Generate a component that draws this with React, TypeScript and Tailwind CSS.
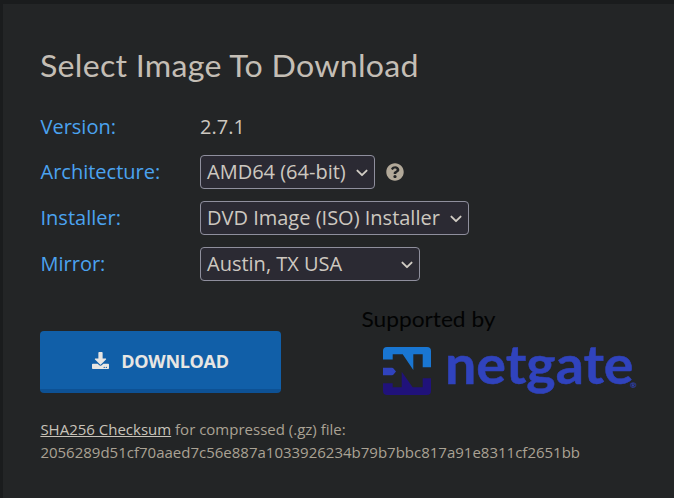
import { FaDownload, FaQuestionCircle } from "react-icons/fa";
import type { ReactNode } from "react";

function SelectBox({ label, width }: { label: string; width: string }) {
  return (
    <button
      type="button"
      className={`flex h-[34px] ${width} items-center justify-between rounded-[4px] border border-[#8f8f9d] bg-[#2b2a33] pr-[6.5px] pl-[6px] text-[20px] leading-[32px] whitespace-nowrap text-[#cdc8c0]`}
    >
      <span>{label}</span>
      <svg width="12" height="8" viewBox="0 0 12 8" fill="none" className="mt-[1px]">
        <path d="M1.4 1.6 6 6.200l4.600-4.600" stroke="#d0cbc3" strokeWidth="1.9" strokeLinecap="round" strokeLinejoin="round" />
      </svg>
    </button>
  );
}

function Row({ label, children }: { label: string; children: ReactNode }) {
  return (
    <div className="flex h-[46px] items-center">
      <div className="w-[160px] pl-[0.5px] text-[20px] text-[#4ba3f0]">{label}</div>
      {children}
    </div>
  );
}

function NetgateLogo() {
  return (
    <svg width="290" height="100" viewBox="350 303 290 100">
      <text x="361.5" y="327" fontFamily="Lato, sans-serif" fontSize="20.500" fill="#020303" textLength="134" lengthAdjust="spacingAndGlyphs">
        Supported by
      </text>
      <path d="M383 359.500V351q0-4 4-4h40q4 0 4 4v16.300h-8.300v-13h-9.400V370l-10.600-15.700h-10v5.200z" fill="#1976d2" />
      <path d="M383 367.700h9q1 0 1.500.7l2.500 3.100-2.500 3.100q-.5.7-1.500.7h-9z" fill="#3043bd" />
      <path d="M383 383.300h9.700v4h9v-15.600l11 15.600h10v-9h8.300V391q0 4-4 4h-40q-4 0-4-4z" fill="#20127a" />
      <text x="445" y="384" fontFamily="Lato, sans-serif" fontWeight="700" fontSize="53" fill="#3043bd" stroke="#3043bd" strokeWidth="0.5" textLength="188.500" lengthAdjust="spacingAndGlyphs">
        netgate
      </text>
      <text x="630" y="388" fontFamily="Lato, sans-serif" fontWeight="700" fontSize="8" fill="#3043bd">
        ®
      </text>
    </svg>
  );
}

export default function App() {
  return (
    <div className="h-[498px] w-[674px] overflow-hidden bg-[#1a1c1d] pt-1 pl-[3px] font-['Open_Sans',sans-serif]">
      <main className="flex h-[494px] flex-col bg-[#232526] pt-[38px] pl-[37px]">
        <h1 className="h-[48px] w-fit origin-left scale-x-[1.071] font-[Lato,sans-serif] text-[30px] leading-[47px] tracking-[0.25px] whitespace-nowrap text-[#c4beb5]">
          Select Image To Download
        </h1>
        <div className="mt-[14px]">
          <Row label="Version:">
            <span className="text-[20px] text-[#cdc8c0]">2.7.1</span>
          </Row>
          <div className="-mt-px">
            <Row label="Architecture:">
              <SelectBox label="AMD64 (64-bit)" width="w-[175px]" />
              <FaQuestionCircle className="ml-[10.5px] size-[18px] text-[#b2a999]" />
            </Row>
            <Row label="Installer:">
              <SelectBox label="DVD Image (ISO) Installer" width="w-[269px]" />
            </Row>
            <Row label="Mirror:">
              <SelectBox label="Austin, TX USA" width="w-[220px]" />
            </Row>
          </div>
        </div>
        <div className="mt-[16px] flex h-[100px] items-start">
          <button
            type="button"
            className="mt-[28px] flex h-[62px] w-[241px] items-center justify-center gap-[12px] rounded-[4px] border-b-4 border-[#0d5194] bg-[#115fa8] pt-[2px] text-[18px] font-bold text-[#e8e6e3]"
          >
            <FaDownload className="mb-[2px] size-[17px]" />
            <span className="tracking-[-0.3px]">DOWNLOAD</span>
          </button>
          <div className="ml-[69px]">
            <NetgateLogo />
          </div>
        </div>
        <p className="mt-[15px] pl-[0.4px] text-[15px] leading-[23px] whitespace-nowrap text-[#aaa294]">
          <a className="text-[#c8c3ba] underline">SHA256 Checksum</a> for compressed (.gz) file:
          <br />
          2056289d51cf70aaed7c56e887a1033926234b79b7bbc817a91e8311cf2651bb
        </p>
      </main>
    </div>
  );
}
